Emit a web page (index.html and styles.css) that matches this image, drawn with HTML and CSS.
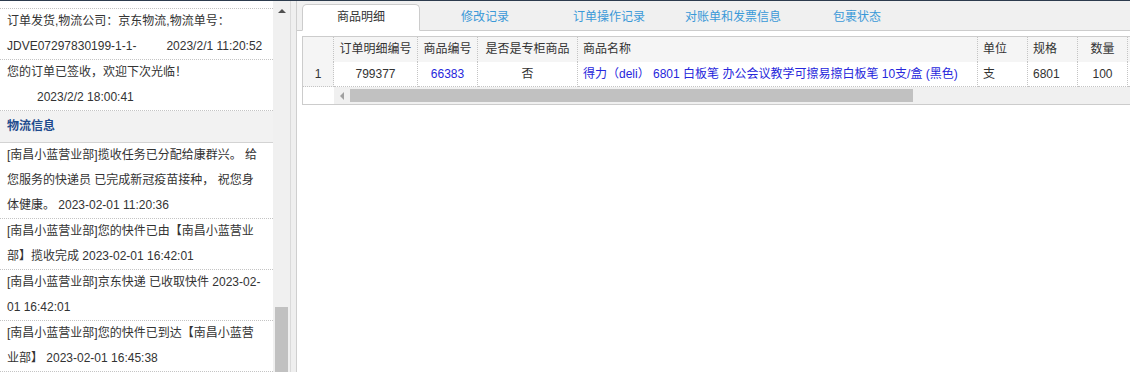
FILE: index.html
```html
<!DOCTYPE html>
<html lang="zh-CN">
<head>
<meta charset="utf-8">
<title>订单详情</title>
<link rel="stylesheet" href="styles.css">
</head>
<body>
<div class="page">
  <aside class="side">
    <div class="log">
      <div class="log-cut"></div>
      <div class="log-item">订单发货,物流公司：京东物流,物流单号：JDVE07297830199-1-1-<span class="log-time">2023/2/1 11:20:52</span></div>
      <div class="log-item">您的订单已签收，欢迎下次光临！<span class="log-time">2023/2/2 18:00:41</span></div>
      <div class="log-head">物流信息</div>
      <div class="log-item">[南昌小蓝营业部]揽收任务已分配给康群兴。 给您服务的快递员 已完成新冠疫苗接种， 祝您身体健康。 2023-02-01 11:20:36</div>
      <div class="log-item">[南昌小蓝营业部]您的快件已由【南昌小蓝营业部】揽收完成 2023-02-01 16:42:01</div>
      <div class="log-item">[南昌小蓝营业部]京东快递 已收取快件 2023-02-<wbr>01 16:42:01</div>
      <div class="log-item">[南昌小蓝营业部]您的快件已到达【南昌小蓝营业部】 2023-02-01 16:45:38</div>
    </div>
    <div class="vscroll"><span class="vs-up"></span><span class="vs-thumb"></span></div>
  </aside>
  <div class="splitter"></div>
  <main class="main">
    <nav class="tabs">
      <div class="tab active">商品明细</div>
      <div class="tab">修改记录</div>
      <div class="tab">订单操作记录</div>
      <div class="tab">对账单和发票信息</div>
      <div class="tab">包裹状态</div>
    </nav>
    <div class="panel">
      <div class="grid">
        <table>
          <thead>
            <tr>
              <th class="w-rn"></th>
              <th class="w-1 center">订单明细编号</th>
              <th class="w-2 center">商品编号</th>
              <th class="w-3 center">是否是专柜商品</th>
              <th class="w-4">商品名称</th>
              <th class="w-5">单位</th>
              <th class="w-6">规格</th>
              <th class="w-7 center">数量</th>
              <th class="w-8"></th>
            </tr>
          </thead>
          <tbody>
            <tr>
              <td class="rn">1</td>
              <td class="center">799377</td>
              <td class="center link">66383</td>
              <td class="center">否</td>
              <td class="link">得力（deli） 6801 白板笔 办公会议教学可擦易擦白板笔 10支/盒 (黑色)</td>
              <td>支</td>
              <td>6801</td>
              <td class="center">100</td>
              <td></td>
            </tr>
          </tbody>
        </table>
        <div class="hscroll">
          <div class="hs-corner"></div>
          <div class="hs-track"><span class="hs-left"></span><span class="hs-thumb"></span></div>
        </div>
      </div>
    </div>
  </main>
</div>
</body>
</html>
```

FILE: styles.css
```css
* { box-sizing: border-box; }
html, body { margin: 0; height: 100%; }
body {
  font: 12px/1.2 "Liberation Sans", Arial, "Noto Sans CJK SC", sans-serif;
  color: #333;
  background: #fff;
  overflow: hidden;
}
.page {
  display: flex;
  height: 372px;
  border-top: 1px solid #2c3b4d;
}

/* left log panel */
.side { display: flex; flex: none; width: 290px; }
.log { width: 273px; overflow: hidden; }
.log-cut { height: 8px; border-bottom: 1px dotted #c4c4c4; }
.log-item {
  line-height: 25px;
  padding: 0 9px 0 7px;
  border-bottom: 1px dotted #c4c4c4;
}
.log-time { margin-left: 30px; white-space: nowrap; }
.log-head {
  height: 32px;
  line-height: 31px;
  padding-left: 7px;
  background: #f2f2f2;
  border-bottom: 1px solid #d3d3d3;
  font-weight: bold;
  color: #1f4b8e;
}
.vscroll {
  width: 17px;
  background: #f0f0f0;
  display: flex;
  flex-direction: column;
  align-items: center;
}
.vs-up {
  margin-top: 8px;
  width: 0; height: 0;
  border-left: 4px solid transparent;
  border-right: 4px solid transparent;
  border-bottom: 4px solid #505050;
}
.vs-thumb {
  margin-top: auto;
  width: 13px;
  height: 65px;
  background: #c1c1c1;
}
.splitter {
  flex: none;
  width: 7px;
  background: #efefef;
  border-left: 1px solid #dadada;
  border-right: 1px solid #cfcfcf;
}

/* right panel */
.main { flex: 1; min-width: 0; overflow: hidden; }
.tabs {
  display: flex;
  align-items: flex-end;
  gap: 6px;
  height: 30px;
  padding: 3px 0 0 5px;
  background: #f0f0f0;
  border-bottom: 1px solid #ccc;
}
.tab {
  width: 118px;
  height: 27px;
  margin-bottom: -1px;
  border: 1px solid transparent;
  line-height: 25px;
  text-align: center;
  color: #3a99d8;
}
.tab.active {
  background: #fff;
  border-color: #ccc;
  border-bottom-color: #fff;
  border-radius: 5px 5px 0 0;
  color: #333;
}
.panel { padding: 5px; }
.grid { width: max-content; border: 1px solid #ccc; }
table {
  border-collapse: separate;
  border-spacing: 0;
  table-layout: fixed;
  width: 885px;
}
th, td {
  height: 25px;
  padding: 0 5px;
  border-right: 1px dotted #c4c4c4;
  white-space: nowrap;
  overflow: hidden;
  text-align: left;
  font-weight: normal;
  color: #333;
}
thead th { background: #f5f5f5; }
tbody td { border-bottom: 1px dotted #c4c4c4; }
.center { text-align: center; }
th.center, td.center { text-align: center; }
td.link { color: #2727dc; }
td.rn { background: #f5f5f5; text-align: center; }
.w-rn { width: 31px; }
.w-1 { width: 84px; }
.w-2 { width: 60px; }
.w-3 { width: 100px; }
.w-4 { width: 400px; }
.w-5 { width: 50px; }
.w-6 { width: 50px; }
.w-7 { width: 50px; }
.w-8 { width: 60px; }
.hscroll { display: flex; height: 17px; }
.hs-corner { width: 31px; background: #fff; }
.hs-track {
  flex: 1;
  display: flex;
  align-items: center;
  background: #f0f0f0;
}
.hs-left {
  margin-left: 6px;
  width: 0; height: 0;
  border-top: 4px solid transparent;
  border-bottom: 4px solid transparent;
  border-right: 4px solid #a0a0a0;
}
.hs-thumb {
  margin-left: 6px;
  width: 563px;
  height: 13px;
  background: #c1c1c1;
}
```
